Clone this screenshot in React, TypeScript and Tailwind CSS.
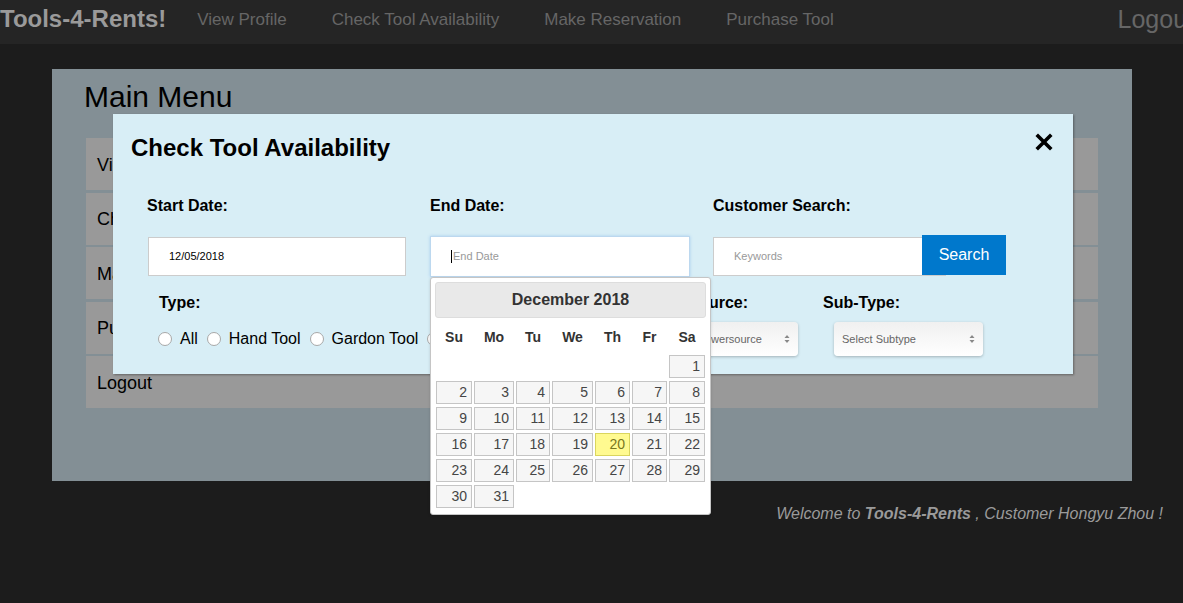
import React from 'react';

const navLinks = ['View Profile', 'Check Tool Availability', 'Make Reservation', 'Purchase Tool'];
const menuItems = ['View Profile', 'Check Tool Availability', 'Make Reservation', 'Purchase Tool', 'Logout'];

// December 2018 starts on Saturday
const weeks: (number | null)[][] = [
  [null, null, null, null, null, null, 1],
  [2, 3, 4, 5, 6, 7, 8],
  [9, 10, 11, 12, 13, 14, 15],
  [16, 17, 18, 19, 20, 21, 22],
  [23, 24, 25, 26, 27, 28, 29],
  [30, 31, null, null, null, null, null],
];
const dayNames = ['Su', 'Mo', 'Tu', 'We', 'Th', 'Fr', 'Sa'];

const Radio: React.FC<{ label: string }> = ({ label }) => (
  <label className="flex items-center gap-[8px]">
    <span className="w-[14px] h-[14px] rounded-full border border-[#a8a8a8] bg-white inline-block" />
    <span className="text-[16px] text-black">{label}</span>
  </label>
);

const SelectBox: React.FC<{ text: string; className: string }> = ({ text, className }) => (
  <div className={`h-[34px] rounded-[4px] bg-gradient-to-b from-[#f0f0f0] to-[#ffffff] shadow-[0_1px_3px_rgba(0,0,0,0.25)] flex items-center justify-between px-[8px] ${className}`}>
    <span className="text-[11px] text-[#666] whitespace-nowrap">{text}</span>
    <svg width="6" height="10" viewBox="0 0 6 10">
      <path d="M3 1 L5.5 4 H0.5 Z" fill="#888" />
      <path d="M3 9 L5.5 6 H0.5 Z" fill="#888" />
    </svg>
  </div>
);

const Calendar: React.FC = () => (
  <div className="absolute left-[317px] top-[163px] w-[281px] h-[238px] bg-white border border-[#c5c5c5] rounded-[3px] p-[4px] shadow-[0_1px_3px_rgba(0,0,0,0.15)]">
    <div className="h-[36px] bg-[#e9e9e9] border border-[#dddddd] rounded-[3px] flex items-center justify-center">
      <span className="text-[16px] font-bold text-[#333]">December 2018</span>
    </div>
    <div className="grid grid-cols-[36px_40px_34px_41px_35px_35px_36px] gap-x-[2px] mt-[9px] ml-[1px]">
      {dayNames.map(d => (
        <div key={d} className="text-center text-[14px] font-bold text-[#333] h-[20px] leading-[20px]">{d}</div>
      ))}
    </div>
    <div className="grid grid-cols-[36px_40px_34px_41px_35px_35px_36px] gap-x-[2px] gap-y-[3px] mt-[8px] ml-[1px]">
      {weeks.flat().map((d, i) =>
        d === null ? (
          <div key={i} className="h-[23px]" />
        ) : (
          <div
            key={i}
            className={`h-[23px] border text-right pr-[4px] text-[14px] leading-[21px] ${
              d === 20 ? 'bg-[#fffa90] border-[#dad55e] text-[#777620]' : 'bg-[#f6f6f6] border-[#c5c5c5] text-[#454545]'
            }`}
          >
            {d}
          </div>
        )
      )}
    </div>
  </div>
);

export default function App() {
  return (
    <div className="min-h-[603px] bg-[#1c1c1c] font-['Liberation_Sans',Arial,sans-serif] relative overflow-hidden">
      {/* Navbar */}
      <div className="h-[44px] bg-[#252525] flex items-center overflow-hidden">
        <span className="text-[24px] font-bold text-[#9a9a9a] mr-[31px] -mt-[6px] whitespace-nowrap">Tools-4-Rents!</span>
        <div className="flex items-center gap-[45px] -mt-[5px]">
          {navLinks.map(l => (
            <span key={l} className="text-[17px] text-[#666666] whitespace-nowrap">{l}</span>
          ))}
        </div>
        <span className="ml-auto mr-[-11px] text-[25px] text-[#666666] -mt-[4px] whitespace-nowrap">Logout</span>
      </div>

      {/* Main panel */}
      <div className="mx-[52px] mt-[25px] w-[1080px] bg-[#838f95] pt-[10px] pb-[73px] px-[34px]">
        <h1 className="text-[30px] text-black ml-[-2px] leading-[36px]">Main Menu</h1>
        <div className="mt-[23px] flex flex-col gap-[2.5px]">
          {menuItems.map(m => (
            <div key={m} className="h-[52px] bg-[#999999] flex items-center px-[11px] pt-[2px]">
              <span className="text-[18px] text-black">{m}</span>
            </div>
          ))}
        </div>
      </div>

      {/* Footer welcome */}
      <div className="flex justify-end pr-[20px] mt-[21px]">
        <span className="text-[16px] italic text-[#9a9a9a]">
          Welcome to <b>Tools-4-Rents</b> , Customer Hongyu Zhou !
        </span>
      </div>

      {/* Modal */}
      <div className="absolute left-[113px] top-[114px] w-[960px] h-[260px] bg-[#d8eef6] shadow-[1px_1px_2px_rgba(0,0,0,0.35)]">
        <div className="flex items-start justify-between pl-[18px] pr-[20px] pt-[19px]">
          <h2 className="text-[24px] font-bold text-black leading-[30px]">Check Tool Availability</h2>
          <svg width="18" height="18" viewBox="0 0 18 18">
            <path d="M3 3 L15 15 M15 3 L3 15" stroke="#000" strokeWidth="3.6" strokeLinecap="square" />
          </svg>
        </div>

        <div className="flex pl-[34px] mt-[33px]">
          <div className="w-[283px]">
            <div className="text-[16px] font-bold text-black leading-[20px]">Start Date:</div>
            <div className="mt-[21px] ml-[1px] w-[258px] h-[39px] bg-white border border-[#cccccc] flex items-center pl-[20px]">
              <span className="text-[11px] text-black">12/05/2018</span>
            </div>
          </div>
          <div className="w-[283px]">
            <div className="text-[16px] font-bold text-black leading-[20px]">End Date:</div>
            <div className="mt-[20px] w-[260px] h-[41px] bg-white border border-[#bcd8ef] shadow-[0_0_3px_#a9cfee] flex items-center pl-[20px]">
              <span className="w-px h-[13px] bg-black mr-[1px]" />
              <span className="text-[11px] text-[#999]">End Date</span>
            </div>
          </div>
          <div>
            <div className="text-[16px] font-bold text-black leading-[20px]">Customer Search:</div>
            <div className="mt-[19px] flex items-start">
              <div className="w-[233px] h-[39px] mt-[2px] bg-white border border-[#cccccc] flex items-center pl-[20px]">
                <span className="text-[11px] text-[#999]">Keywords</span>
              </div>
              <button className="-ml-[24px] w-[84px] h-[40px] bg-[#0078cc] text-white text-[16px] relative">Search</button>
            </div>
          </div>
        </div>

        <div className="flex pl-[46px] mt-[16px]">
          <div className="w-[477px]">
            <div className="text-[16px] font-bold text-black leading-[20px]">Type:</div>
            <div className="flex items-center gap-[9px] mt-[14px] -ml-[1px]">
              <Radio label="All" />
              <Radio label="Hand Tool" />
              <Radio label="Gardon Tool" />
              <Radio label="Ladder Tool" />
            </div>
          </div>
          <div className="w-[187px]">
            <div className="text-[16px] font-bold text-black leading-[20px]">Power Source:</div>
            <SelectBox text="Select Powersource" className="w-[142px] mt-[9px] ml-[20px]" />
          </div>
          <div>
            <div className="text-[16px] font-bold text-black leading-[20px]">Sub-Type:</div>
            <SelectBox text="Select Subtype" className="w-[149px] mt-[9px] ml-[11px]" />
          </div>
        </div>

        <Calendar />
      </div>
    </div>
  );
}
